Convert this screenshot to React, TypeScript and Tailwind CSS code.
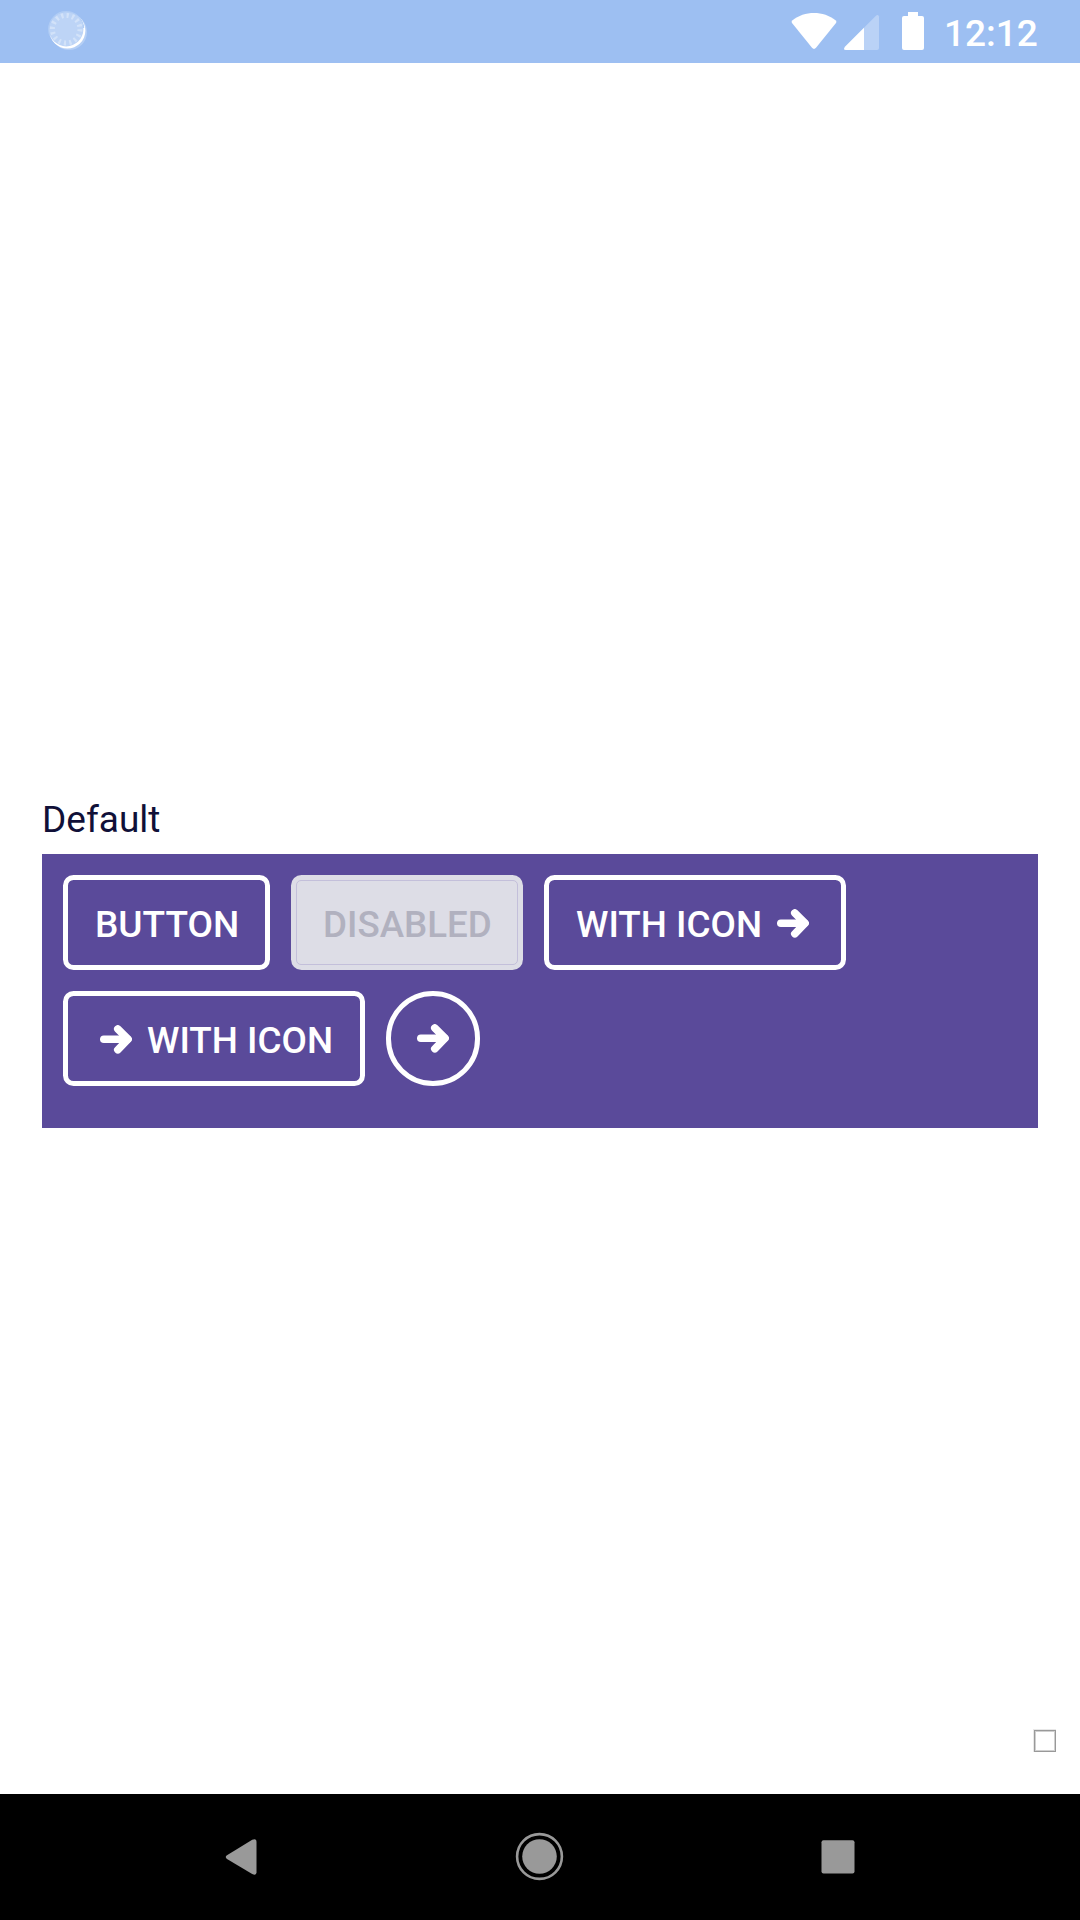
import React from "react";

function Arrow({ className = "" }: { className?: string }) {
  return (
    <svg className={`h-[29px] w-8 shrink-0 ${className}`} viewBox="0 0 32 29" fill="none" stroke="white" strokeWidth="7.6" strokeLinecap="round" strokeLinejoin="round">
      <path d="M3.8 14.2H27.5" />
      <path d="M17.8 4L28.1 14.2L17.8 24.8" />
      <path d="M20 9L26 14.2L20 20Z" fill="white" strokeWidth="2" />
    </svg>
  );
}

function StatusBar() {
  return (
    <header className="flex h-[63px] items-start bg-[#9dbff2] text-white">
      <svg className="h-[63px] w-[120px]" viewBox="0 0 120 63">
        <circle cx="69" cy="32" r="18" fill="white" fillOpacity=".25" />
        <circle cx="67.4" cy="30.6" r="18" fill="white" />
        <circle cx="66.2" cy="29.2" r="17.2" fill="#bdd4f6" />
        <circle cx="66.2" cy="29.2" r="17.5" fill="none" stroke="#b1cdf5" strokeWidth="1.2" strokeDasharray="60 50" strokeDashoffset="-48" />
        <circle cx="66.2" cy="29.2" r="13.8" fill="none" stroke="#d2e2f9" strokeWidth="5" strokeDasharray="2.2 3.219" />
      </svg>
      <svg className="ml-auto h-[63px] w-[150px]" viewBox="785 0 150 63" fill="white">
        <path d="M792.2 20.4C804.5 10.5 823.5 10.5 835.8 20.4Q837 21.6 836 23L816 47.8Q814 50 812 47.8L792 23Q791 21.6 792.2 20.4Z" />
        <path d="M845 46.8L876 15.7Q878 14 879 16.5V48Q879 50 877 50H846Q842.7 50 845 46.8Z" fillOpacity=".3" />
        <path d="M845 46.8L864 27.7V50H846Q842.7 50 845 46.8Z" />
        <path d="M908 12H918V16H922Q924 16 924 18V48Q924 50 922 50H904Q902 50 902 48V18Q902 16 904 16H908Z" />
      </svg>
      <span className="mt-[13px] ml-[9px] w-[136px] text-[37px] leading-[42px] font-medium">12:12</span>
    </header>
  );
}

const outline = "flex h-[95px] shrink-0 items-center rounded-[10.5px] border-[5px] border-white pt-[4px] leading-[43px] font-medium whitespace-nowrap";

export default function App() {
  return (
    <div className="flex h-[1920px] w-[1080px] flex-col overflow-hidden bg-white font-['Roboto',sans-serif]">
      <StatusBar />
      <main className="flex flex-1 flex-col px-[42px] pt-[735px]">
        <div className="h-[56px] text-[37px] leading-[43px] text-[#101038]">Default</div>
        <section className="flex h-[274px] flex-col gap-[21px] bg-[#5a4a9a] p-[21px] text-white">
          <div className="flex gap-[21px]">
            <button className={`${outline} w-[207px] pl-[27px] text-[37px]`}>BUTTON</button>
            <button disabled className="flex h-[95px] w-[232px] shrink-0 rounded-[10.5px] bg-[#dddde6] p-[5px] text-[36.75px] leading-[43px] font-medium text-[#b1b1bf]">
              <span className="flex h-full w-full items-center rounded-[5px] border border-[#c3bfda] pt-[4px] pl-[26px]">DISABLED</span>
            </button>
            <button className={`${outline} w-[302px] pl-[27px] text-[36.85px]`}>
              WITH ICON<Arrow className="ml-auto mr-[32px] -mt-[3px]" />
            </button>
          </div>
          <div className="flex gap-[21px]">
            <button className={`${outline} w-[302px] pl-[32px] text-[36.85px]`}>
              <Arrow className="mr-[15px] -mt-[3px]" />WITH ICON
            </button>
            <button aria-label="Next" className="flex h-[95px] w-[94px] items-center justify-center rounded-full border-[5px] border-white">
              <Arrow />
            </button>
          </div>
        </section>
        <div className="mt-auto -mr-[18px] mb-[42px] h-[23px] w-[23px] self-end border border-[#e8e8e8]">
          <div className="h-[22px] w-[22px] border border-[#999]">
            <div className="h-full w-full border border-[#d0d0d0]" />
          </div>
        </div>
      </main>
      <nav className="h-[126px] bg-black">
        <svg className="h-[126px] w-[1080px]" viewBox="0 1794 1080 126" fill="#999">
          <path d="M227 1855.3L252.2 1839.8Q256.5 1838 256.5 1842V1872.2Q256.5 1876 252.2 1874L227 1859Q224.5 1857 227 1855.3Z" />
          <circle cx="539.5" cy="1856.5" r="17.3" />
          <circle cx="539.5" cy="1856.5" r="22.4" fill="none" stroke="#999" strokeWidth="2.6" />
          <rect x="821.5" y="1840.3" width="33" height="33.2" rx="2" />
        </svg>
      </nav>
    </div>
  );
}
